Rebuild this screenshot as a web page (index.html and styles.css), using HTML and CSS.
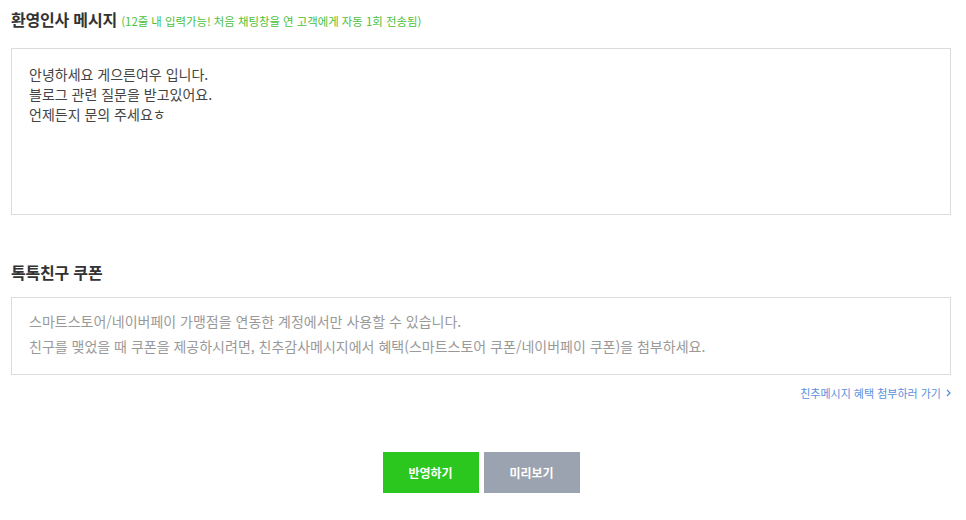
FILE: index.html
```html
<!DOCTYPE html>
<html lang="ko">
<head>
<meta charset="utf-8">
<title>환영인사 메시지</title>
<link rel="stylesheet" href="styles.css">
</head>
<body>
<div class="page">
  <section class="section">
    <h2 class="title">환영인사 메시지 <span class="hint">(12줄 내 입력가능! 처음 채팅창을 연 고객에게 자동 1회 전송됨)</span></h2>
    <div class="message-box">
      <p>안녕하세요 게으른여우 입니다.</p>
      <p>블로그 관련 질문을 받고있어요.</p>
      <p>언제든지 문의 주세요ㅎ</p>
    </div>
  </section>
  <section class="section coupon">
    <h2 class="title">톡톡친구 쿠폰</h2>
    <div class="coupon-box">
      <p>스마트스토어/네이버페이 가맹점을 연동한 계정에서만 사용할 수 있습니다.</p>
      <p>친구를 맺었을 때 쿠폰을 제공하시려면, 친추감사메시지에서 혜택(스마트스토어 쿠폰/네이버페이 쿠폰)을 첨부하세요.</p>
    </div>
    <div class="link-row">
      <a class="more-link" href="#">친추메시지 혜택 첨부하러 가기<svg class="chev" width="5" height="8" viewBox="0 0 5 8"><path d="M1 1l3 3-3 3" fill="none" stroke="currentColor" stroke-width="1.3"/></svg></a>
    </div>
  </section>
  <div class="actions">
    <button class="btn btn-primary">반영하기</button>
    <button class="btn btn-secondary">미리보기</button>
  </div>
</div>
</body>
</html>
```
FILE: styles.css
```css
* { box-sizing: border-box; }
html, body { margin: 0; padding: 0; background: #fff; }
body {
  font-family: "Noto Sans CJK KR", "Noto Sans", sans-serif;
  color: #444;
}
.page {
  padding: 6px 15px 0 11px;
}
.title {
  margin: 0;
  height: 26px;
  font-size: 16px;
  line-height: 26px;
  font-weight: 700;
  color: #333;
  letter-spacing: -0.2px;
  white-space: nowrap;
}
.hint {
  font-size: 11.4px;
  line-height: 14px;
  font-weight: 400;
  color: #4cc13c;
  letter-spacing: 0;
}
.message-box {
  margin-top: 16px;
  height: 167px;
  border: 1px solid #dcdcdc;
  padding: 15px 17px;
  font-size: 14px;
  line-height: 20px;
  color: #444;
}
.message-box p, .coupon-box p { margin: 0; }
.coupon { margin-top: 44px; }
.coupon-box {
  margin-top: 12px;
  height: 78px;
  border: 1px solid #dcdcdc;
  padding: 11px 17px;
  font-size: 14px;
  line-height: 25px;
  color: #999;
}
.link-row {
  display: flex;
  justify-content: flex-end;
  margin-top: 11px;
}
.more-link {
  display: flex;
  align-items: center;
  gap: 5px;
  font-size: 11px;
  line-height: 14px;
  color: #5b8fdc;
  text-decoration: none;
  letter-spacing: 0;
}
.chev { display: block; }
.actions {
  display: flex;
  justify-content: center;
  gap: 5px;
  margin-top: 52px;
}
.btn {
  width: 96px;
  height: 41px;
  border: 0;
  font-family: inherit;
  font-size: 12px;
  font-weight: 700;
  color: #fff;
  padding: 0;
}
.btn-primary { background: #2bc71e; }
.btn-secondary { background: #9aa3af; }
```
